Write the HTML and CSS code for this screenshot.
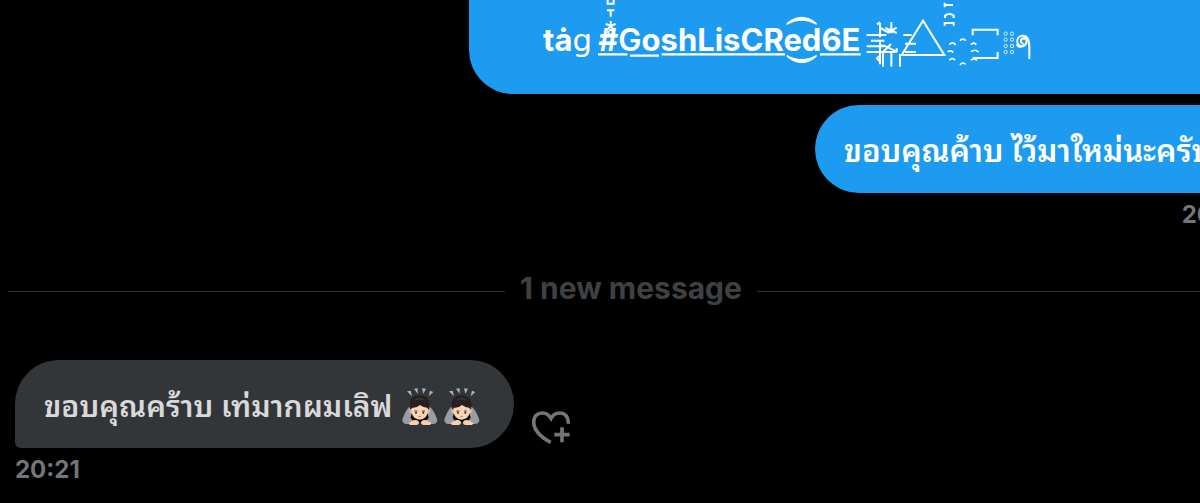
FILE: index.html
```html
<!DOCTYPE html>
<html lang="th">

<head>
    <meta charset="UTF-8">
    <meta name="viewport" content="width=device-width, initial-scale=1.0">
    <title>Messages</title>
    <link rel="stylesheet" href="styles.css">
</head>

<body>
    <svg class="defs" aria-hidden="true">
        <symbol id="bow" viewBox="0 0 108 117">
            <g fill="#aeb4ba">
                <path d="M15 13l11-2 4 17z" />
                <path d="M36 5l11-1 0 16z" />
                <path d="M60 4l12 1-8 15z" />
                <path d="M84 11l10 4-14 13z" />
            </g>
            <path fill="#999da3" d="M29 56C15 62 8 78 1 98q0 12 13 13l34-4-13-51zM77 56c14 6 22 22 29 42q0 12-13 13l-34-4 13-51z" />
            <path fill="#0c0908" d="M29 80h48l3 12-9 13H35l-9-13z" />
            <ellipse cx="27" cy="71" rx="5" ry="8" fill="#e9b795" />
            <ellipse cx="79" cy="71" rx="5" ry="8" fill="#e9b795" />
            <path fill="#f8d5b6" d="M29 54h48v24q-5 18-24 20-19-2-24-20z" />
            <path fill="#26201e" d="M25 68C18 39 32 25 53 25s35 14 28 43l-6-6q-10 0-21-8-12 10-23 8z" />
            <path fill="#463b37" d="M34 41q19-16 38 0-19-7-38 0z" />
            <path d="M37 72h9M60 72h9" fill="none" stroke="#5b4034" stroke-width="3" />
            <circle cx="42" cy="77" r="3" fill="#38251f" />
            <circle cx="64" cy="77" r="3" fill="#38251f" />
            <path d="M49 89q4-2 8 0" fill="none" stroke="#c07a65" stroke-width="3" />
            <path fill="#f6cfaf" d="M19 109l15-9q16-3 17 7-1 7-11 7H24zM89 109l-15-9q-16-3-17 7 1 7 11 7h16z" />
        </symbol>
    </svg>

    <main class="chat">
        <div class="message sent">
            <div class="bubble first">
                <span>ta&#x307;<span class="thin">&#x581;</span></span>
                <a class="hashtag" href="#">#<span class="light">G</span>oshLisCRed6E
                    <svg class="marks" viewBox="207 0 660 201" aria-hidden="true">
                        <g fill="none" stroke="#fff" stroke-width="6">
                            <path d="M236-6V11H254V-6M234 31H256M245 31V50" />
                            <path d="M245 63V77M230 72L245 77L260 72M237 88L245 77L253 88" />
                            <path d="M245 88L237 97L245 105L253 97Z" stroke-width="4" />
                            <path d="M207 163H295M303 167H390M398 163H768M873 163H995" stroke-width="7" />
                        </g>
                        <path fill="#fff" d="M773 69Q818 31 863 69V75Q818 49 773 75ZM773 170Q818 208 863 170V164Q818 190 773 164Z" />
                    </svg>
                </a>
                <svg class="symbols" viewBox="255 0 501 201" aria-hidden="true">
                    <g fill="none" stroke="#fff" stroke-width="6">
                        <path d="M257 105H316M270 122H310M257 139H310M257 156H347" />
                        <path d="M297 68V112M288 73L297 67M297 83L322 98L347 83M322 98V86M331 66V100M313 84L347 99" />
                        <path d="M297 125V193M297 137H310L347 155M347 145V157M306 156L330 132M297 166L288 175L297 185" />
                        <path d="M306 160V200M331 160V200M357 200V165H490L426 62L362 165M367 105H392M372 131H405M372 156H405" />
                        <path d="M491 15H516M491 8V22M492 54V47Q505 37 518 47V54M491 77V69H518V77" />
                        <path d="M537 122Q545 113 554 122M505 134Q514 125 522 132V136M570 134Q578 125 586 134M500 156Q507 148 517 157M570 155Q582 146 593 156M505 181Q514 170 522 181M570 181Q578 172 588 181M537 195Q545 184 554 193" stroke-width="5" />
                        <path d="M575 106V89H650V106M575 174H650V156" />
                        <path d="M728 131C717 131 717 115 729 115C741 116 738 136 725 139C703 139 703 107 726 107C742 107 745 124 745 143V177" />
                        <path d="M724 139Q710 144 708 132" />
                    </g>
                    <g fill="none" stroke="#d6ecfc" stroke-width="3">
                        <circle cx="674" cy="101" r="5" /><circle cx="693" cy="101" r="5" />
                        <circle cx="674" cy="119" r="5" /><circle cx="693" cy="119" r="5" />
                        <circle cx="674" cy="138" r="5" /><circle cx="693" cy="138" r="5" />
                        <circle cx="674" cy="156" r="5" /><circle cx="693" cy="156" r="5" />
                    </g>
                </svg>
            </div>
        </div>

        <div class="message sent">
            <div class="bubble reply">ขอบคุณค้าบ ไว้มาใหม่นะครับ</div>
            <time>20:19</time>
        </div>

        <div class="divider"><span>1 new message</span></div>

        <div class="message received">
            <div class="row">
                <div class="bubble">
                    <span>ขอบคุณคร้าบ เท่มากผมเลิฟ</span>
                    <svg class="emoji" role="img" aria-label="bow"><use href="#bow" /></svg>
                    <svg class="emoji" role="img" aria-label="bow"><use href="#bow" /></svg>
                </div>
                <button class="react" type="button" aria-label="Add reaction">
                    <svg viewBox="455 176 114 102">
                        <path d="M511 273C474 253 459 232 460 210C461 194 472 185 486 185C498 185 506 191 512 201C518 191 526 185 538 185C553 185 564 195 564 217M545 228V273M522 250H568" />
                    </svg>
                </button>
            </div>
            <time>20:21</time>
        </div>
    </main>
</body>

</html>
```
FILE: styles.css
```css
* {
    box-sizing: border-box;
}

body {
    margin: 0;
    background-color: #000;
    color: #fff;
    font-family: Inter, "Noto Sans Thai Looped", "Noto Sans Thai", "Noto Sans", sans-serif;
    font-size: 30px;
    font-weight: 700;
    line-height: 40px;
    overflow: hidden;
}

.defs {
    position: absolute;
    width: 0;
    height: 0;
}

/* the conversation is wider than the window and runs off its right side */
.chat {
    width: calc(100% + 62px);
    padding: 0 15px;
}

.message {
    display: flex;
    flex-direction: column;
    align-items: flex-start;
}

.sent {
    align-items: flex-end;
    margin-bottom: 11px;
}

.bubble {
    display: flex;
    align-items: center;
    height: 88px;
    padding: 4px 29px 0;
    border-radius: 44px;
    font-weight: 600;
    white-space: nowrap;
}

.sent .bubble {
    background-color: #1d9bf0;
    border-bottom-right-radius: 6px;
    font-size: 31px;
}

.received .bubble {
    gap: 6px;
    padding-right: 34px;
    background-color: #333639;
    border-bottom-left-radius: 6px;
    color: #d9d9d9;
}

.received .bubble span {
    margin-right: 4px;
}

.sent .first {
    align-items: flex-start;
    gap: 6px;
    min-width: 778px;
    height: 94px;
    padding: 0 0 0 74px;
    border-radius: 0 0 6px 44px;
    font-weight: 700;
}

.first > span,
.hashtag {
    padding-top: 20px;
}

.reply {
    min-width: 432px;
}

.thin {
    font-family: "DejaVu Sans", sans-serif;
    font-weight: 400;
}

.light {
    font-weight: 600;
}

.hashtag {
    position: relative;
    color: #fff;
    text-decoration: none;
}

.marks {
    position: absolute;
    top: 0;
    left: 0;
    width: 220px;
    height: 67px;
    overflow: visible;
}

.symbols {
    width: 167px;
    height: 67px;
}

time {
    color: #71767b;
    font-size: 24px;
    line-height: 44px;
}

.divider {
    display: flex;
    align-items: center;
    gap: 15px;
    margin: 31px -7px 46px;
    color: #3e4144;
}

.divider span {
    padding-bottom: 6px;
}

.divider::before,
.divider::after {
    content: "";
    flex: 1;
    height: 1px;
    background-color: #2f3336;
}

.row {
    display: flex;
    align-items: flex-end;
    gap: 18px;
}

.emoji {
    width: 36px;
    height: 39px;
}

.react {
    padding: 0 0 4px;
    border: 0;
    background: none;
}

.react svg {
    display: block;
    width: 38px;
    height: 34px;
    fill: none;
    stroke: #71767b;
    stroke-width: 11px;
}
```
